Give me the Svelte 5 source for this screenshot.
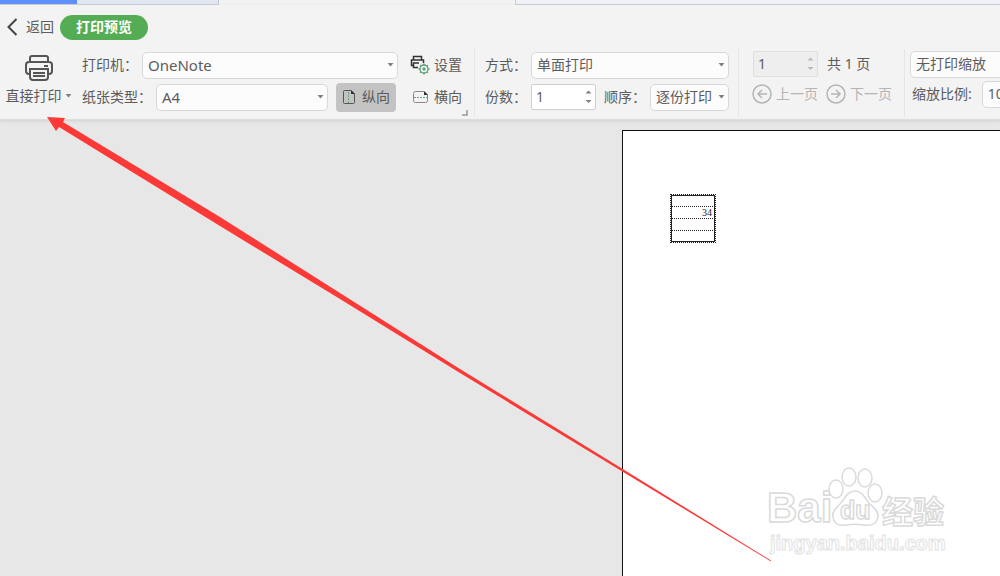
<script lang="ts">
  let printer = $state("OneNote");
  let paper = $state("A4");
  let orientation = $state<"portrait" | "landscape">("portrait");
  let mode = $state("单面打印");
  let order = $state("逐份打印");
  let copies = $state(1);
  let page = $state(1);
  let scaling = $state("无打印缩放");
  let ratio = $state("100 %");

  const CELLS = ["", "34", "", ""];

  function step(delta: number): void {
    copies = Math.max(1, copies + delta);
  }
</script>

{#snippet caret()}
  <svg class="caret" width="7" height="4" viewBox="0 0 7 4" aria-hidden="true"><path d="M0.5 0h6L3.5 3.5z" /></svg>
{/snippet}

{#snippet spinner(disabled: boolean)}
  <span class="spin">
    <button type="button" aria-label="增加" {disabled} onclick={() => step(1)}>
      <svg width="7" height="4" viewBox="0 0 7 4"><path d="M0.5 3.5h6L3.5 0.5z" /></svg>
    </button>
    <button type="button" aria-label="减少" {disabled} onclick={() => step(-1)}>
      <svg width="7" height="4" viewBox="0 0 7 4"><path d="M0.5 0h6L3.5 3z" /></svg>
    </button>
  </span>
{/snippet}

<div class="app">
  <div class="tabs">
    <span class="tab active"></span>
    <span class="tab second"></span>
    <span class="gap"></span>
    <span class="rest"></span>
  </div>

  <header>
    <div class="title">
      <button type="button" class="back">
        <svg width="11" height="18" viewBox="0 0 11 18" aria-hidden="true"><path d="M9.5 1 1.5 9l8 8" /></svg>
        返回
      </button>
      <h1>打印预览</h1>
    </div>

    <div class="ribbon">
      <button type="button" class="print">
        <svg width="28" height="26" viewBox="0 0 28 26" aria-hidden="true">
          <path d="M5 7V3q0-2 2-2h14q2 0 2 2v4M5 19H4q-3 0-3-3v-6q0-3 3-3h20q3 0 3 3v6q0 3-3 3h-1M19 11h4" />
          <path d="M5 14h18v8q0 3-3 3H8q-3 0-3-3zM8 18h12M8 21h12" />
        </svg>
        <span>直接打印{@render caret()}</span>
      </button>

      <section class="setup">
        <div class="row">
          <label for="printer">打印机：</label>
          <span class="drop grow">
            <select id="printer" bind:value={printer}><option>OneNote</option></select>
            {@render caret()}
          </span>
          <button type="button" class="tool">
            <svg width="20" height="20" viewBox="0 0 20 20" aria-hidden="true">
              <g class="ink"><path d="M3.500 5V1.500h8V5M3 10.500H1.500V5h12v3M9 8H3.500v4.500H8" /></g>
              <g class="green"><circle cx="14" cy="14" r="4" /><circle cx="14" cy="14" r="1" /><path d="M14 8.500V10M14 18v1.500M8.500 14H10M18 14h1.500M10.200 10.200l1 1M16.800 16.800l1 1M17.800 10.200l-1 1M11.200 16.800l-1 1" /></g>
            </svg>
            设置
          </button>
        </div>
        <div class="row">
          <label for="paper">纸张类型：</label>
          <span class="drop grow">
            <select id="paper" bind:value={paper}><option>A4</option></select>
            {@render caret()}
          </span>
          <button
            type="button"
            class="orient"
            class:on={orientation === "portrait"}
            aria-pressed={orientation === "portrait"}
            onclick={() => (orientation = "portrait")}
          >
            <svg width="14" height="16" viewBox="0 0 14 16" aria-hidden="true">
              <path d="M1.500 2.500q0-1 1-1H9l3.500 3.500v8.500q0 1-1 1h-9q-1 0-1-1z" />
              <path class="fill" d="M9 1v4h4z" />
              <path class="dash" d="M6.500 3v11" />
            </svg>
            纵向
          </button>
          <button
            type="button"
            class="tool"
            class:on={orientation === "landscape"}
            aria-pressed={orientation === "landscape"}
            onclick={() => (orientation = "landscape")}
          >
            <svg width="17" height="14" viewBox="0 0 17 14" aria-hidden="true">
              <path class="grey" d="M1.500 3.500q0-2 2-2H12L15.500 5v5.500q0 2-2 2h-10q-2 0-2-2z" />
              <path class="fill" d="M12 1v4h4z" />
              <path class="dash" d="M2 7.500h13" />
            </svg>
            横向
          </button>
        </div>
        <svg class="corner" width="6" height="6" viewBox="0 0 6 6" aria-hidden="true"><path d="M5 0v5H0" /></svg>
      </section>

      <section class="job">
        <div class="row">
          <label for="mode">方式：</label>
          <span class="drop grow">
            <select id="mode" bind:value={mode}><option>单面打印</option></select>
            {@render caret()}
          </span>
        </div>
        <div class="row">
          <label for="copies">份数：</label>
          <span class="num">
            <input id="copies" type="number" min="1" bind:value={copies} />
            {@render spinner(false)}
          </span>
          <label class="order" for="order">顺序：</label>
          <span class="drop grow">
            <select id="order" bind:value={order}><option>逐份打印</option></select>
            {@render caret()}
          </span>
        </div>
      </section>

      <section class="pages">
        <div class="row">
          <span class="num off">
            <input type="number" aria-label="页码" disabled bind:value={page} />
            {@render spinner(true)}
          </span>
          <span class="total">共 1 页</span>
        </div>
        <div class="row nav">
          <button type="button" disabled>
            <svg width="20" height="20" viewBox="0 0 20 20" aria-hidden="true"><circle cx="10" cy="10" r="9" /><path d="M15 10H6M10 6l-4 4 4 4" /></svg>
            上一页
          </button>
          <button type="button" disabled>
            <svg width="20" height="20" viewBox="0 0 20 20" aria-hidden="true"><circle cx="10" cy="10" r="9" /><path d="M5 10h9M10 6l4 4-4 4" /></svg>
            下一页
          </button>
        </div>
      </section>

      <section class="scale">
        <div class="row">
          <span class="drop wide">
            <select aria-label="打印缩放" bind:value={scaling}><option>无打印缩放</option></select>
            {@render caret()}
          </span>
        </div>
        <div class="row ratio">
          <label for="ratio">缩放比例:</label>
          <span class="drop">
            <select id="ratio" bind:value={ratio}><option>100 %</option></select>
            {@render caret()}
          </span>
        </div>
      </section>
    </div>
  </header>

  <main>
    <article>
      <table>
        <tbody>
          {#each CELLS as cell}
            <tr><td>{cell}</td></tr>
          {/each}
        </tbody>
      </table>
    </article>
  </main>

  <svg class="mark" width="184" height="92" viewBox="0 0 184 92">
    <g class="logo">
      <text x="1" y="54" font-size="42">Bai</text>
      <ellipse cx="70" cy="21" rx="7" ry="9" />
      <ellipse cx="83" cy="9" rx="7" ry="9" />
      <ellipse cx="99" cy="10" rx="7" ry="9" />
      <ellipse cx="109" cy="25" rx="7" ry="9" />
      <path d="M89 23c-8 0-10 8-15 13s-8 8-7 13c1 8 8 9 14 8 6-1 10-1 16 0s14 0 15-8c1-6-5-10-9-14s-6-12-14-12z" />
      <text x="74" y="51" font-size="25">du</text>
      <text class="cjk" x="116" y="55" font-size="31">经验</text>
    </g>
    <text class="site" x="4" y="82" font-size="20">jingyan.baidu.com</text>
  </svg>

  <svg class="pointer" width="726" height="446" viewBox="0 0 726 446" aria-hidden="true">
    <path d="M0 0 18 1 16 5 173 100 293 176 413 252 553 338 724 443.500V444.500L553 341 413 256 293 182 173 109 12 10 9 14z" />
  </svg>
</div>

<style>
  :global(body) { margin: 0; }
  .app {
    position: relative;
    display: flex;
    flex-direction: column;
    min-height: 100vh;
    overflow: hidden;
    background: #e7e7e7;
    color: #5c5c5c;
    font: 14px/20px "Noto Sans", "Noto Sans CJK SC", sans-serif;
  }
  button, select, input { font: inherit; color: inherit; margin: 0; box-sizing: border-box; }
  button { display: flex; align-items: center; padding: 0; border: 0; background: none; white-space: nowrap; }
  svg { flex: none; fill: none; stroke: #555; }
  label { white-space: nowrap; margin-right: 4px; }

  .tabs { display: flex; height: 5px; background: #f3f3f3; }
  .tabs span { box-sizing: border-box; border-bottom: 1px solid #c5cbd9; }
  .tabs .active { width: 77px; background: #5f8ffb; }
  .tabs .second { width: 142px; background: #e1e6f0; border-right: 1px solid #c5cbd9; }
  .tabs .gap { width: 296px; border: 0; }
  .tabs .rest { flex: 1; background: #f0f2f8; border-left: 1px solid #c5cbd9; }

  header { background: #f3f3f3; border-bottom: 1px solid #dcdcdc; box-shadow: 0 1px 3px #d0d0d0; overflow: hidden; }
  .title { display: flex; align-items: center; height: 44px; padding-left: 7px; }
  .back { gap: 8px; }
  h1 { margin: 0 0 0 6px; padding: 2px 16px 3px; border-radius: 13px; background: #54ad54; color: #fff; font-size: 14px; line-height: 20px; font-weight: 700; }
  .back svg { stroke: #444; stroke-width: 2; }

  .ribbon { display: flex; height: 70px; }
  .print { flex: none; flex-direction: column; gap: 5px; width: 77px; padding-top: 6px; }
  .print svg { stroke-width: 2; }
  .print span { display: flex; align-items: center; gap: 3px; }
  section { display: flex; flex-direction: column; gap: 2px; flex: none; box-sizing: border-box; height: 68px; padding-top: 1px; position: relative; border-right: 1px solid #e5e5e5; }
  .row { display: flex; align-items: center; height: 30px; }
  .setup { width: 398px; padding-left: 5px; }
  .job { width: 264px; padding: 1px 9px 0 10px; }
  .pages { width: 166px; padding-left: 13px; padding-top: 0; gap: 0; }
  .scale { width: 190px; padding-left: 5px; padding-top: 0; gap: 0; border: 0; }

  .drop { display: inline-grid; align-items: center; width: 90px; }
  .drop.wide { width: 170px; }
  .drop.grow { flex: 1; }
  .drop select { grid-area: 1 / 1; width: 100%; min-width: 0; height: 27px; padding: 0 14px 0 5px; border: 1px solid #d9d9d9; border-radius: 5px; background: #fcfcfc; appearance: none; outline: none; }
  #printer, #paper { font-size: 15px; }
  .drop .caret { grid-area: 1 / 1; justify-self: end; margin-right: 4px; pointer-events: none; }
  svg.caret, .spin svg { stroke: none; fill: #808080; }

  .tool { gap: 4px; width: 76px; padding-left: 12px; }
  .orient { gap: 6px; width: 60px; height: 29px; margin-left: 8px; padding-left: 6px; border-radius: 4px; }
  .orient + .tool { padding-left: 16px; width: 78px; gap: 5px; }
  .on { background: #c3c3c3; }
  .ink { stroke: #333; stroke-width: 1.5; }
  .green { stroke: #5b9c76; stroke-width: 1.3; }
  .grey { stroke: #888; }
  .fill { fill: #333; stroke: none; }
  .dash { stroke: #68a681; stroke-dasharray: 2 1; }
  .corner { position: absolute; right: 6px; bottom: 1px; stroke: #999; stroke-width: 1.5; }

  .num { display: flex; box-sizing: border-box; width: 65px; height: 26px; border: 1px solid #cfcfcf; border-radius: 2px; background: #fff; }
  .num input { flex: 1; min-width: 0; padding: 0 4px; border: 0; background: none; outline: none; appearance: textfield; }
  .num input::-webkit-inner-spin-button { appearance: none; margin: 0; }
  .spin { display: flex; flex-direction: column; justify-content: space-evenly; width: 10px; }
  .num.off { background: #eee; border-color: #dedede; margin-left: 1px; }
  .off .spin svg { fill: #b8b8b8; }
  .order { margin-left: 8px; }
  .total { margin-left: 9px; }
  .ratio label { margin: 0 10px 0 2px; }
  .nav { gap: 8px; }
  .nav button { gap: 4px; color: #b5b5b5; }
  .nav svg { stroke: #b5b5b5; stroke-width: 1.5; }

  main { display: flex; flex: 1; padding: 10px 0 0 62.2%; }
  article { flex: 1; padding: 63px 0 0 47px; border: solid #111; border-width: 1px 0 0 1px; background: #fff; }
  table { width: 46px; border-spacing: 0; border: 1px dotted #222; outline: 1px solid #222; outline-offset: -2px; }
  td { height: 11px; padding: 0 3px 0 0; border-bottom: 1px dotted #222; color: #222; font: 10px/11px "Liberation Serif", serif; text-align: right; }
  tr:last-child td { border: 0; }

  .mark { position: absolute; right: 50px; bottom: 16px; overflow: visible; }
  .mark text { font-family: "Liberation Sans", sans-serif; font-weight: 700; }
  .mark .cjk { font-family: "Noto Sans CJK SC", sans-serif; }
  .logo { fill: #fff; stroke: #dadada; stroke-width: 1.5; }
  .mark .site { fill: #fff; stroke: #e2e2e2; stroke-width: 1; }
  .pointer { position: absolute; left: 47px; top: 117px; stroke: none; fill: #fb3a38; pointer-events: none; }
</style>
